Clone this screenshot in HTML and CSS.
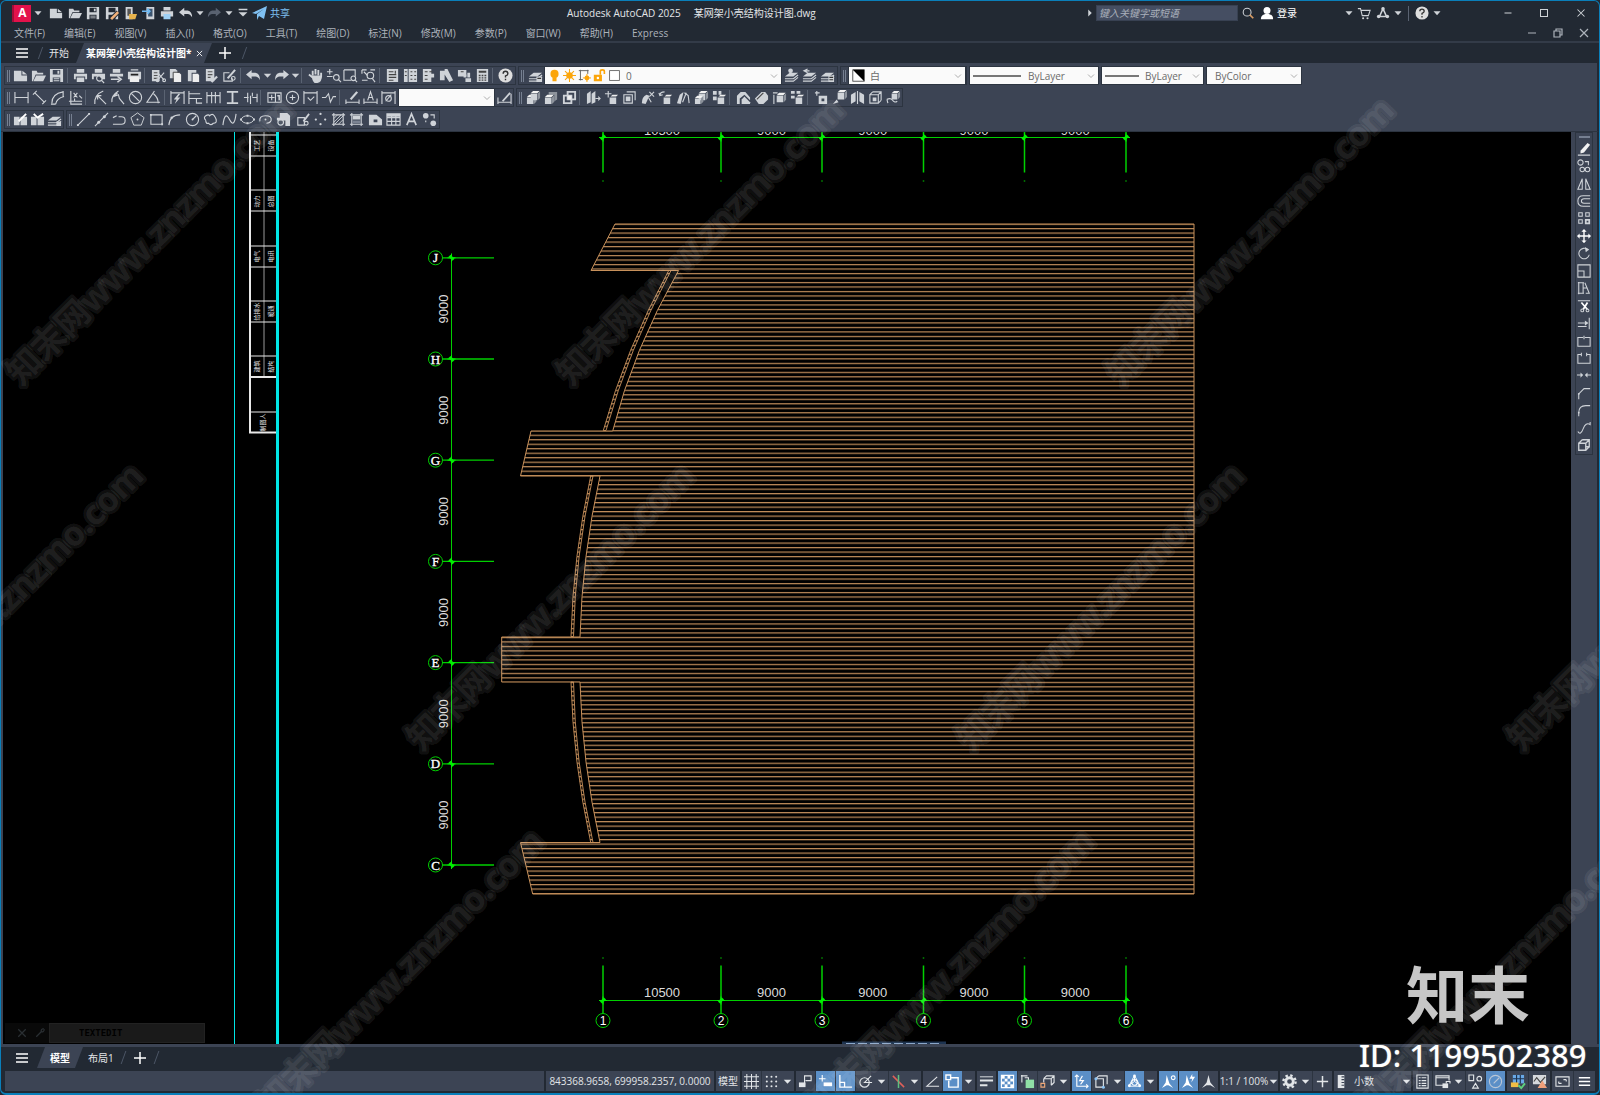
FILE: index.html
```html
<!DOCTYPE html>
<html lang="zh-CN">
<head>
<meta charset="utf-8">
<title>Autodesk AutoCAD 2025 - 某网架小壳结构设计图.dwg</title>
<link rel="stylesheet" href="styles.css">
</head>
<body>
<header class="titlebar">
  <div class="quick">
    <button class="logo" aria-label="应用程序菜单">A</button>
    <div class="quick-tools" data-tools="v new open save saveas openweb saveweb printc undo v redo-dim v more"></div>
    <button class="share"><span data-icon="plane"></span>共享</button>
  </div>
  <div class="title"><span>Autodesk AutoCAD 2025</span><span>某网架小壳结构设计图.dwg</span></div>
  <div class="account">
    <span class="cell-s" data-icon="right"></span>
    <input class="search" type="text" placeholder="键入关键字或短语" aria-label="搜索">
    <button class="cell-l" aria-label="搜索" data-icon="find"></button>
    <button class="login"><span data-icon="user"></span>登录</button>
    <div class="account-tools" data-tools="v cart apps v | help v"></div>
    <div class="window-tools" data-tools="min max close"></div>
  </div>
</header>
<nav class="menubar">
  <a href="#">文件(F)</a><a href="#">编辑(E)</a><a href="#">视图(V)</a><a href="#">插入(I)</a><a href="#">格式(O)</a><a href="#">工具(T)</a><a href="#">绘图(D)</a><a href="#">标注(N)</a><a href="#">修改(M)</a><a href="#">参数(P)</a><a href="#">窗口(W)</a><a href="#">帮助(H)</a><a href="#">Express</a>
  <div class="doc-tools" data-tools="min restore close"></div>
</nav>
<nav class="filetabs">
  <button class="burger" aria-label="菜单" data-icon="burger"></button>
  <span class="slash"></span>
  <button class="filetab">开始</button>
  <button class="filetab active"><span>某网架小壳结构设计图*</span><span data-icon="x"></span></button>
  <button class="plus" aria-label="新建" data-icon="plus"></button>
  <span class="slash"></span>
</nav>
<section class="docks">
  <div class="dockrow">
    <div class="toolbar w-standard" data-tools="new open save | print preview publish plot | cut copy paste match block | undo v redo v | pan zoomrt zoomwin zoomprev | props dcenter palettes sheets markup calc | help"></div>
    <div class="toolbar w-layers">
      <div class="tools w-one" data-tools="layers"></div>
      <label class="combo grow"><span data-icon="bulb"></span><span data-icon="sun"></span><span data-icon="vpfreeze"></span><span data-icon="lock"></span><span data-icon="swatch"></span><select aria-label="图层"><option>0</option></select><span data-icon="chev"></span></label>
      <div class="tools w-three" data-tools="laycur layprev laystate"></div>
    </div>
    <div class="toolbar w-color"><label class="combo grow"><span data-icon="bw"></span><select aria-label="颜色"><option>白</option></select><span data-icon="chev"></span></label></div>
    <label class="combo w-ltype"><span class="line long"></span><select aria-label="线型"><option>ByLayer</option></select><span data-icon="chev"></span></label>
    <label class="combo w-lweight"><span class="line"></span><select aria-label="线宽"><option>ByLayer</option></select><span data-icon="chev"></span></label>
    <label class="combo w-plot"><select aria-label="打印样式"><option>ByColor</option></select><span data-icon="chev"></span></label>
  </div>
  <div class="dockrow">
    <div class="toolbar w-dim">
      <div class="tools grow" data-tools="dimlin dimali dimarc dimord | radius jogged diameter angular | quick baseline continue space break | tol center inspect jog | dimedit dimtext dimupdate"></div>
      <label class="combo w-dimstyle"><select aria-label="标注样式"><option></option></select><span data-icon="chev"></span></label>
      <div class="tools w-one" data-tools="dimstyle"></div>
    </div>
    <div class="toolbar w-solid" data-tools="union subtract intersect | extrude moveface offsetface delface rotface taper copyface colorface | coloredge copyedge imprint clean | sep3 shell check bodyedit sweep3"></div>
  </div>
  <div class="dockrow">
    <div class="toolbar w-ref" data-tools="refedit refclose layset"></div>
    <div class="toolbar w-draw" data-tools="line xline pline polygon rect arc circle cloud spline ellipse earc insert mkblock point hatch gradient region table text addsel"></div>
  </div>
</section>
<main class="work">
  <div class="canvas">
    <svg class="model" viewBox="3 131 1568 913" preserveAspectRatio="xMidYMid slice">
      <defs>
        <pattern id="hatch" patternUnits="userSpaceOnUse" x="0" y="223" width="40" height="4.493"><rect width="40" height="1.2" fill="#c08c5a"/></pattern>
        <g id="tick"><path d="M-4 0H4M0-4V4" stroke-width="1"/><path d="M-2-2L2 2" stroke-width="3"/></g>
      </defs>
      <g stroke="#00e5e5" fill="none"><path d="M234.500 131V1044"/><path d="M277.500 131V1044" stroke-width="3"/></g>
      <g stroke="#e8e8e8" fill="none">
        <path d="M250 131V432.500" stroke-width="2"/><path d="M264 131V376" stroke="#999"/>
        <path d="M250 134.500H276M250 155.500H276M250 189.500H276M250 210.500H276M250 245.500H276M250 266.500H276M250 300.500H276M250 321.500H276M250 355.500H276M250 411.500H276"/>
        <path d="M250 376.500H276M249 432H276" stroke-width="2"/>
      </g>
      <g class="block-text" id="block-text"></g>
      <path fill="url(#hatch)" stroke="#c8915b" d="M615 223.500H1194V893.500H532.700L520.500 842H600Q582 761 580 681.500H501.700V636.500H580Q582 556 600 475.500H520.500L531 430.500H612.700Q633 350 678.500 270H591Z"/>
      <g fill="url(#hatch)" stroke="#c8915b" stroke-width=".9">
        <path d="M668.700 270Q625 350 603.300 430H606Q628 350 671 270Z"/>
        <path d="M590.700 475.500Q573 556 571 636H573.500Q575 556 593 475.500Z"/>
        <path d="M590.700 842Q573 761 571 681.500H573.500Q575 761 593 842Z"/>
      </g>
      <g id="axes" class="axes"></g>
      <g><path d="M842 1041H946V1044H842Z" fill="#1d3350"/><path d="M846 1043H940" stroke="#8aa6c8" stroke-dasharray="9 3" stroke-width="1"/></g>
    </svg>
    <form class="cmdline">
      <span class="grip"></span><button type="button" aria-label="关闭" data-icon="x"></button><button type="button" aria-label="自定义" data-icon="wrench"></button>
      <input type="text" value="TEXTEDIT" aria-label="命令">
    </form>
  </div>
  <aside class="sidedock"><div class="modify" data-tools="erase copyobj mirror offset array move rotate scale stretch trim extend breakpt breakobj join chamfer fillet blend explode"></div></aside>
</main>
<nav class="layouts">
  <button class="burger" aria-label="布局菜单" data-icon="burger"></button>
  <button class="layout active"><span>模型</span></button>
  <button class="layout">布局1</button>
  <span class="slash"></span>
  <button class="plus" aria-label="新建布局" data-icon="plus"></button>
  <span class="slash"></span>
</nav>
<footer class="status">
  <div class="cell blank"></div>
  <div class="cell coords">843368.9658, 699958.2357, 0.0000</div>
  <button class="cell space">模型</button>
  <div class="group" data-tools="grid snap v"></div>
  <div class="group" data-tools="infer dyn! ortho! polar v iso v"></div>
  <div class="group" data-tools="otrack osnap! v"></div>
  <div class="group" data-tools="lwt"></div>
  <div class="group" data-tools="transp! cycle osnap3 v"></div>
  <div class="group" data-tools="ucs! filter v gizmo! v"></div>
  <div class="group" data-tools="annvis! annauto! ann"></div>
  <button class="cell scale">1:1 / 100%<span data-icon="v"></span></button>
  <div class="group" data-tools="gear v addcross"></div>
  <button class="cell units"><span data-icon="ruler"></span>小数<span class="end" data-icon="v"></span></button>
  <div class="group" data-tools="qprops lockui v isolate perf!"></div>
  <div class="group wide" data-tools="hw graphics"></div>
  <div class="group wide" data-tools="full burger"></div>
</footer>
<div class="overlay">
  <svg class="marks" viewBox="0 0 1600 1095" preserveAspectRatio="xMidYMid slice" id="marks"></svg>
  <div class="stamp"><div class="brand">知末</div><div class="ident">ID: 1199502389</div></div>
</div>
<script src="app.js"></script>
</body>
</html>
```
FILE: styles.css
```css
:root {
  --dark: #222933;
  --panel: #3c4454;
  --edge: #2c3440;
  --ink: #cfd3d8;
  --blue: #5b8fc7;
}
* { box-sizing: border-box; }
body {
  margin: 0;
  height: 100vh;
  display: flex;
  flex-direction: column;
  position: relative;
  overflow: hidden;
  border: solid #0a7fba;
  border-width: 1px 1px 2px 1px;
  border-radius: 6px;
  background: var(--dark);
  color: var(--ink);
  font: 10px/14px "Open Sans", "Noto Sans CJK SC", sans-serif;
  white-space: nowrap;
}
button, input, select {
  margin: 0; padding: 0; border: 0; background: none;
  color: inherit; font: inherit; appearance: none; outline: 0;
}
a { color: inherit; text-decoration: none; }
svg { display: block; }
[data-icon], .tool { display: flex; align-items: center; justify-content: center; }
.tool { flex: 1 1 0; min-width: 0; }
.icon { width: 16px; height: 16px; flex: none; overflow: visible; }
[data-tools] { display: flex; align-items: center; }
.caret { flex: 0 0 10px; }
.sep { flex: 0 0 5px; height: 15px; border-left: 1px solid #5a6372; margin-left: 1px; }

.titlebar { flex: 0 0 24px; display: grid; grid-template-columns: 566px 1fr auto; align-items: center; }
.quick { display: flex; align-items: center; padding-left: 11px; }
.logo { width: 19px; height: 17px; background: #e3124b; color: #fff; font-weight: 700; font-size: 12px; line-height: 16px; border-left: 2px solid #a30d38; }
.quick-tools { width: 221px; }
.quick-tools .icon { width: 14px; height: 14px; }
.quick-tools .tool:first-child { flex-basis: 16px; justify-content: flex-start; }
.share { display: flex; align-items: center; gap: 2px; color: #7fc0f2; }
.title { display: flex; gap: 13px; color: #e2e5e8; }
.account { display: flex; align-items: center; }
.cell-s { width: 12px; }
.cell-l { width: 20px; }
.search { width: 142px; height: 16px; padding: 0 2px; background: #454e62; border: 1px solid #384152; font-style: italic; }
.search::placeholder { color: #aab0bb; opacity: 1; }
.account .icon { width: 14px; height: 14px; }
.login { display: flex; align-items: center; gap: 3px; width: 86px; padding-left: 2px; color: #fff; }
.account-tools { width: 98px; }
.account-tools .sep { margin-left: 5px; }
.window-tools { width: 109px; margin-left: 48px; }

.menubar { flex: 0 0 18px; display: flex; align-items: center; gap: 19px; padding-left: 13px; border-bottom: 2px solid #333b48; color: #adb3bb; }
.doc-tools { width: 78px; margin-left: auto; margin-right: 2px; }

.filetabs, .layouts { display: flex; align-items: stretch; color: #e2e5e8; }
.filetabs { padding-left: 9px; flex: 0 0 20px; }
.burger { width: 24px; }
.slash { width: 1px; margin: 4px 6px; background: #4c5666; transform: skewX(-20deg); }
.filetab { padding: 0 7px 0 2px; }
.filetab.active { width: 136px; display: flex; align-items: center; justify-content: space-between; padding: 0 9px 0 10px; background: var(--panel); clip-path: polygon(8px 0, 100% 0, calc(100% - 8px) 100%, 0 100%); font-weight: 700; color: #fff; }
.filetab.active .icon { width: 7px; height: 7px; }
.plus { width: 26px; }

.docks { flex: none; background: var(--panel); padding: 3px 3px 2px; display: flex; flex-direction: column; gap: 3px; border-right: 2px solid var(--dark); border-bottom: 1px solid #2c3440; }
.dockrow { display: flex; height: 19px; gap: 2px; }
.toolbar { display: flex; align-items: center; border: 1px solid var(--edge); padding-left: 7px; background: linear-gradient(90deg, #768091 0 1px, transparent 1px 2px, #768091 2px 3px, transparent 3px) 2px 3px / 4px 12px no-repeat; }
.toolbar .icon { width: 15px; height: 15px; }
.tools { height: 100%; }
.grow { flex: 1; }
.w-one { width: 18px; }
.w-three { width: 55px; }
.w-standard { width: 512px; }
.w-layers { width: 320px; }
.w-color { width: 127px; }
.w-ltype { width: 130px; }
.w-lweight { width: 103px; }
.w-plot { width: 96px; }
.w-dim { width: 510px; }
.w-dimstyle { width: 97px; }
.w-solid { width: 387px; }
.w-ref { width: 60px; }
.w-draw { width: 374px; }
.combo { display: flex; align-items: center; height: 19px; padding: 0 3px; background: #fafafa; color: #6b6b6b; border: 1px solid var(--edge); gap: 2px; min-width: 0; }
.combo .icon { width: 13px; height: 13px; }
.combo select { flex: 1; min-width: 0; padding-left: 3px; }
.w-plot select { padding-left: 5px; }
.combo [data-icon="chev"] .icon { width: 8px; height: 8px; }
.line { width: 34px; height: 2px; background: #777; margin: 0 1px 0 0; }
.line.long { width: 48px; margin-right: 2px; }

.work { flex: 1; min-height: 0; display: flex; background: var(--panel); border-left: 2px solid var(--panel); }
.canvas { flex: 1; min-width: 0; position: relative; background: #000; }
.model { position: absolute; width: 100%; height: 100%; }
.axes { font: 13px "Liberation Sans", sans-serif; fill: #dcdcdc; text-anchor: middle; }
.axes .serif { font: 13px "Liberation Serif", serif; fill: #fff; stroke: #fff; stroke-width: .3; }
.axes .num { font-size: 12px; fill: #fff; }
.block-text { font: 6px "Noto Sans CJK SC", sans-serif; fill: #e4e4e4; text-anchor: middle; }
.sidedock { flex: 0 0 28px; padding: 0 4px 0 4px; border-right: 2px solid var(--dark); }
.modify { flex-direction: column; height: 323px; padding-top: 7px; border: 1px solid var(--edge); background: linear-gradient(#768091 0 0) 3px 3px / 11px 2px no-repeat; }
.modify .icon { width: 14px; height: 14px; }
.cmdline { position: absolute; left: 2px; bottom: 1px; width: 200px; height: 20px; display: flex; align-items: stretch; color: #2a2f33; background: #090909; }
.cmdline .grip { width: 8px; }
.cmdline button { width: 18px; }
.cmdline .icon { width: 10px; height: 10px; }
.cmdline input { flex: 1; min-width: 0; padding-left: 29px; background: #1a1a1a; color: #000; font: 700 9px "DejaVu Sans Mono", monospace; border: 1px solid #222; }

.layouts { flex: 0 0 25px; padding: 0 0 1px 9px; border-top: 3px solid var(--panel); }
.layout { padding: 0 3px 0 5px; }
.layout.active { width: 46px; margin-left: 3px; padding: 0; background: var(--panel); color: #fff; font-weight: 700; clip-path: polygon(8px 0, 100% 0, calc(100% - 8px) 100%, 0 100%); }
.layouts .plus { width: 20px; }

.status { flex: 0 0 24px; display: flex; gap: 2px; padding: 2px 4px 2px; color: #e2e5e8; }
.cell { background: var(--panel); display: flex; align-items: center; justify-content: center; }
.blank { flex: 1; }
.coords { width: 168px; }
.space { width: 24px; }
.scale { width: 58px; gap: 0; }
.units { width: 77px; justify-content: flex-start; gap: 5px; }
.units .end { margin-left: auto; }
.cell [data-icon="v"] { width: 10px; }
.group { gap: 1px; background: var(--edge); }
.group .tool { flex: 0 0 19px; height: 20px; background: var(--panel); }
.group.wide .tool { flex-basis: 21px; }
.group .tool.caret { flex: 0 0 13px; margin-left: -1px; }
.group .tool.on { background: var(--blue); color: #fff; }
.status .icon { width: 15px; height: 15px; }

.overlay { position: absolute; inset: 0; pointer-events: none; }
.marks { width: 100%; height: 100%; font: 700 34px "Noto Sans", "Noto Sans CJK SC", sans-serif; }
.marks text { fill: #fff; fill-opacity: .08; stroke: #fff; stroke-opacity: .07; stroke-width: 6px; stroke-linejoin: round; paint-order: stroke; }
.stamp { position: absolute; right: 10px; bottom: 18px; width: 230px; color: #fff; font-family: "Noto Sans", "Noto Sans CJK SC", sans-serif; }
.brand { font: 700 62px/66px "Noto Sans CJK SC", sans-serif; color: #c6c6c6; padding-left: 47px; margin-bottom: 10px; }
.ident { font-size: 31px; font-weight: 500; line-height: 40px; text-shadow: 0 0 2px #555, 0 0 1px #777; }
```
FILE: app.js
```js
const s = (d, c, w) => `<path d="${d}" fill="none" stroke="${c || 'currentColor'}" stroke-width="${w || 1.2}"/>`;
const f = (d, c) => `<path d="${d}" fill="${c || 'currentColor'}" fill-rule="evenodd"/>`;
const ring = (x, y, r, c) => `<circle cx="${x}" cy="${y}" r="${r}" fill="none" stroke="${c || 'currentColor'}" stroke-width="1.2"/>`;
const dot = (x, y, r, c) => `<circle cx="${x}" cy="${y}" r="${r}" fill="${c || 'currentColor'}"/>`;
const small = f('M6 8h7v7H6z') + f('M7 7l2-2h6l-2 2z', '#eee');
const sheets = f('M1 9l5-4h9l-5 4z') + s('M1 11.500h9l5-4M1 14h9l5-4');
const solid = (x, y, w) => f(`M${x} ${y + 3}h${w - 3}v${w - 3}h-${w - 3}z`) + f(`M${x} ${y + 2.5}l2.500-2.500h${w - 3}l-2.500 2.500z`, '#f2f2f2') + f(`M${x + w - 2.5} ${y + 3}l2.500-2.500v${w - 3}l-2.500 2.500z`, '#8d939c');

const icons = {
  v: f('M4 6h8l-4 4.500z'),
  chev: s('M2 5l6 6 6-6', '#999', 1.6),
  right: f('M6 4l4 4-4 4z'),
  more: s('M3 4h10', null, 1.6) + f('M3 7h10l-5 5z'),
  new: f('M1 3h8v5h6v6H1zM10 3l5 4h-5z'),
  open: f('M1 3h5l1 2h6v2H5l-3 7H1z') + f('M5.500 8H16l-3 6H2.500z'),
  save: f('M1 1h14v14H1zM4 2v5h8V2zM4 10v5h8v-5z') + f('M9 3h2v3H9zM5 11h6v1H5zM5 13h6v1H5z'),
  saveas: f('M1 1h14v14H1zM4 2v5h8V2zM4 10v5h8v-5z') + s('M7 15l8-8', '#222933', 5) + s('M7 15l8-8', '#f2b179', 3),
  openweb: f('M3 1h8v14H3z') + f('M5 3h4v8H5z', '#555') + f('M7 9h9l-2 6H7z', '#e7b34c'),
  saveweb: f('M5 1h9v14H5z') + f('M7 3h5v9H7z', '#3c5570') + s('M0 6h8M6 3l3 3-3 3', '#6db8f2', 1.8),
  print: f('M4 1h8v4H4zM1 6h14v6h-2V9H3v3H1zM4 10h8v5H4z'),
  printc: f('M4 1h8v4H4zM1 6h14v6H1z') + f('M4 9h8v6H4z', '#9ed0f4'),
  preview: f('M4 1h8v4H4zM1 6h14v6h-3L9 9H3v3H1z') + ring(9, 11, 3) + s('M11 13l3 3'),
  publish: f('M4 1h8v4H4zM1 6h14v3H1z') + s('M2 12h9M9 9l4 3-4 3', null, 1.6),
  plot: f('M1 4h14v8H1z') + f('M4 6h8v2H4z', '#222') + f('M3 9h10v6H3z', '#eee') + s('M4 2h8'),
  cut: f('M1 2h8v12H1z') + s('M3 5h4M3 8h4M3 11h4', '#555') + s('M7 5l7 8M14 5l-7 8') + ring(7, 13, 1.5) + ring(14, 13, 1.5),
  copy: f('M2 1h6l2 2v8H2z') + f('M6 5h6l2 2v8H6z', '#eee') + s('M5.500 15V4.500H12', '#444', 1),
  paste: f('M2 2h9v3H6v9H2z') + f('M7 6h6l1 2v7H7z', '#eee'),
  match: f('M2 1h9v13H2z') + s('M4 4h5M4 7h5M4 10h3', '#555') + s('M8 15l6-6', null, 2.4),
  block: s('M8 5H2v9h9v-3') + s('M6 11l8-9', null, 2.2) + ring(12, 11, 2),
  undo: f('M0 7l6-5v3h4q5 1 5 8-2-4-5-4H6v3z'),
  redo: f('M16 7l-6-5v3H6q-5 1-5 8 2-4 5-4h4v3z'),
  'redo-dim': f('M16 7l-6-5v3H6q-5 1-5 8 2-4 5-4h4v3z', '#596270'),
  pan: s('M5 8V3M8 7V1M11 8V2M14 9V5M5 10L1 7', null, 2) + f('M4 8h11q0 7-5 8H7q-3-3-3-8z'),
  zoomrt: s('M1 4h6M4 1v6M1 9h6') + ring(11, 10, 3) + s('M13 12l3 3'),
  zoomwin: s('M1 2h12v7M1 2v11h8') + ring(11, 11, 2.500) + s('M13 13l2 2'),
  zoomprev: s('M1 2h5M1 2v4M15 2h-5M1 13h6M3 4l4 4') + ring(10, 8, 3.500) + s('M12 11l3 4'),
  props: f('M2 1h12v14H2z') + s('M4 4h5M4 7h8M4 10h8M4 13h5M11 3v3', '#444'),
  dcenter: f('M1 1h4v14H1zM6 1h9v14H6z') + s('M2 4h2M2 8h2M8 4h2M12 4h2M8 8h2M12 8h2M8 12h2M12 12h2', '#444'),
  palettes: f('M2 1h9v14H2z') + s('M4 4h3M4 8h3M4 12h3M9 4h3', '#444') + f('M10 6h4v4h-4z'),
  sheets: f('M1 3h5v10H1zM6 1h3l6 12-4 2-5-8z'),
  markup: f('M1 2h9v7H1z') + s('M4 4h3', '#444') + f('M7 7h3v3H7zM11 5h3v5h-3zM9 11h6v4H9z'),
  calc: f('M2 1h12v14H2z') + s('M4 4h8', '#444', 2) + s('M4 8h8M4 10.500h8M4 13h8', '#444', 1.4) + s('M6.500 6v9M9.500 6v9'),
  help: dot(8, 8, 7.5, '#dedede') + s('M5.500 6q0-2.500 2.500-2.500T10.500 6Q10.500 7.500 8 8.500v1.500M8 11.500v1.500', '#333', 1.5),
  layers: sheets + f('M9 9h6v6H9z') + s('M10 11h4', '#333'),
  laycur: sheets + dot(7, 3, 2.500), layprev: sheets + s('M6 1L2 3l4 2M2 3h6'), laystate: sheets + f('M9 8h6v7H9z') + s('M10 10h4M10 12.500h4', '#333'),
  layset: sheets + f('M10 10h5v5h-5z'),
  bulb: dot(8, 6, 5, '#fba50a') + f('M5.500 10h5v5h-5z', '#fba50a'),
  sun: dot(8, 8, 4, '#fba50a') + s('M8 0v16M0 8h16M2.500 2.500l11 11M13.500 2.500l-11 11', '#fba50a', 1.3),
  vpfreeze: s('M1 2h12M3 1v13M12 1v5M1 13h5', '#666') + dot(11, 11, 3, '#fba50a') + s('M11 6v10M6 11h10', '#fba50a'),
  lock: f('M1 7h10v8H1z', '#fba50a') + s('M9 7V3q0-2 2.500-2T14 3v3', '#fba50a', 2) + dot(6, 11, 1.500, '#fff'),
  swatch: '<rect x="2" y="2" width="12" height="12" fill="#fff" stroke="#555"/>',
  bw: '<rect x="1" y="1" width="14" height="14" fill="#fff" stroke="#333"/><path d="M1 1h14v14z"/>',
  dimlin: s('M1 2v12M15 2v12M1 8h14'), dimali: s('M1 5l4-4M11 15l4-4M3 3l10 10'),
  dimarc: s('M2 14Q2 4 14 2M6 15Q7 9 15 7M1 15h5M14 1v6'), dimord: s('M3 1v14h12M1 12h14M6 3l4 5M10 3l-4 5M12 6l3 3M7 12V9'),
  radius: s('M12 1Q2 5 3 15M6 6l9 9M6 10V6h4'), jogged: s('M9 1Q1 6 2 13M4 7l5-2 1 4 5 6M4 7l4-4'),
  diameter: ring(8, 8, 6.500) + s('M3.500 3.500l9 9'), angular: s('M9 1L1 13h14M8 4q5 4 5 10'),
  quick: s('M1 1v14M15 1v14M1 3h14') + f('M9 4L4 10h3l-2 5 6-7H8l3-4z'), baseline: s('M1 1v14M1 4h12M9 9h6M1 9h8v5h6'),
  continue: s('M1 2v12M6 2v12M10 2v12M15 2v12M1 6h14'), space: s('M2 2h12M2 14h12M8 2v12', null, 2),
  break: s('M1 8h5M10 8h5M5 3v10M10 3v4M15 4v9M8 6v9'), tol: s('M1 3h14v10H1zM9 3v10M2 8h6M5 5v6') + s('M11 6h2v5', null, 1.6),
  center: ring(8, 8, 6.500) + s('M5 8h6M8 5v6'), inspect: s('M1 1v14M15 1v14M1 3h14M5 8l3 3 4-4'),
  jog: s('M1 8h4l3-4 2 9 3-6h3'), dimedit: s('M1 10v5M15 10v5M1 13h14') + s('M6 10l7-8', null, 2.4),
  dimtext: s('M1 9v6M15 9v6M1 13h14M5 11l3-9 3 9M6 8h4'), dimupdate: s('M1 1v14M15 1v14M1 3h14M5 12l6-7') + ring(8, 9, 3),
  dimstyle: s('M1 8v7M15 4v11M1 13h14') + s('M6 12l8-9', null, 2),
  union: solid(1, 5, 10) + solid(5, 1, 10), subtract: f('M5 2h9v8l-3 2V5H5z', '#8d939c') + solid(1, 5, 10),
  intersect: s('M2 6h8v8H2zM6 2h8v8H6z', null, 2) + f('M6 6h4v4H6z', '#eee'),
  extrude: f('M1 4l4-3v12l-4 2zM6 4l4-3v12l-4 2z') + s('M10 9h5M13 7l2 2-2 2'), moveface: s('M1 4h7M4.500 1v7') + small,
  offsetface: s('M2 5h9v9H2zM5 2h9v9') + f('M4 7h5v5H4z'), delface: f('M2 14q0-7 5-9l3 1-4 9z') + s('M10 2l5 5M15 2l-5 5M9 8l3 5'),
  rotface: s('M2 6q0-4 5-4M1 3l1 3 3-1') + small, taper: f('M1 14l3-9 4-3-3 13z') + s('M9 3l4 3 1 8M7 13l4-10'),
  copyface: solid(5, 1, 10) + solid(1, 6, 9), colorface: f('M1 1h4v4H1zM7 1h3v4H7zM1 7h4v4H1z') + small,
  coloredge: f('M1 15V6l4-4h5l5 6v3L9 5 4 9v6z') + f('M6 10l3-3 6 6v2H6z'), copyedge: f('M1 9l7-7h4l3 4v4l-5 5H5z') + s('M3 10l7-7', '#444'),
  imprint: s('M2 5v10M1 3h5') + solid(5, 3, 10), clean: f('M1 1h4v3H1zM1 6h4v3H1zM7 1h4v3H7z') + small,
  sep3: s('M1 3h5M3 1v5') + f('M5 6h9v9H5zM8 9v3h3V9z'), shell: solid(6, 0, 10) + f('M1 15l4-5 2 3z'),
  check: f('M1 5l5-3v10l-5 3zM10 2l5 3v10l-5-3z') + s('M8 1v14'), bodyedit: s('M2 5h9v9H2zM5 2h9v9M2 5l3-3M11 5l3-3M11 14l3-3') + f('M5 8h4v4H5z'),
  sweep3: solid(6, 1, 9) + s('M1 10q4-2 6 1t5 1M1 10l1 4'),
  refedit: f('M1 5h6v9H1zM8 5h7v9H8z') + s('M6 10l8-8', '#fff', 2), refclose: f('M1 5h6v9H1zM8 5h7v9H8z') + s('M4 2l4 4 6-4', '#fff', 2),
  line: s('M2 14L14 2') + f('M1 13h2v2H1zM13 1h2v2h-2z'), xline: s('M1 15L15 1') + dot(5, 11, 1.6) + dot(11, 5, 1.6),
  pline: s('M1 13h9q4 0 4-4T10 5H7M1 6l4-2'), polygon: s('M8 1l7 5-3 8H4L1 6z', null, 1) + dot(8, 8, 1), rect: s('M2 3h12v10H2z') + f('M1 2h2v2H1zM13 12h2v2h-2z'),
  arc: s('M2 14Q3 3 14 3') + dot(5, 6, 1.3), circle: ring(8, 8, 6.500) + s('M8 8l4-4') + dot(8, 8, 1),
  cloud: s('M3 9Q0 6 3 4t4 0q3-3 5 0t2 4q1 4-3 4-3 3-5 0-3 1-3-3'), spline: s('M1 14Q3-2 8 8T15 2'),
  ellipse: `<ellipse cx="8" cy="8" rx="6.500" ry="4" fill="none" stroke="currentColor"/>` + f('M7 3h2v2H7zM7 11h2v2H7zM0 7h2v2H0zM14 7h2v2h-2z'),
  earc: s('M2 10Q1 4 8 4q7 0 6 5-1 3-5 3') + dot(8, 8, 1), insert: f('M4 1h8l3 3v11h-5V9H1V6h3z') + ring(5, 11, 3), mkblock: s('M3 6h7v8H3z') + s('M9 10l6-8', null, 1.8) + ring(12, 12, 2),
  point: dot(8, 2, 1.2) + dot(3, 8, 1.2) + dot(13, 8, 1.2) + dot(8, 13, 1.2),
  hatch: s('M1 3h14M1 13h14M3 1v14M13 1v14') + s('M3 7l4-4M3 11l8-8M4 13l9-9M8 13l5-5', null, 1),
  gradient: s('M1 3h14M1 13h14M3 1v14M13 1v14') + f('M4 4h8v4H4z') + f('M4 9h8v3H4z', '#7b8392'), region: f('M1 3h8l6 5v6H1zM6 8v3h4V8z'),
  table: s('M1 2h14v12H1zM1 6h14M1 10h14M6 4v10M10.500 4v10') + f('M1 2h14v3H1z'), text: s('M3 14L8 2l5 12M5 10h6', null, 1.7),
  addsel: dot(4, 4, 3) + dot(12, 12, 3) + s('M9 3h4v4M4 9v2'),
  erase: f('M4 10l8-9 3 2-7 9-4 1z', '#f2f2f2') + s('M1 15h14'), copyobj: ring(4, 4, 3) + ring(6, 12, 2.6) + ring(12, 12, 2.6) + s('M9 3h4v4'),
  mirror: s('M6 2v12H1zM10 2v12h5z'), offset: s('M15 2H7Q1 2 1 8t6 6h8M15 5.500H8q-3 0-3 2.500t3 2.500h7'),
  array: s('M2 2h4v4H2zM10 2h4v4h-4zM2 10h4v4H2z') + f('M9 9h6v6H9zM11 11v2h2v-2z'),
  move: s('M8 1v14M1 8h14', '#fff', 1.6) + f('M8 0l3 3H5zM8 16l3-3H5zM0 8l3-3v6zM16 8l-3-3v6z', '#fff'),
  rotate: s('M12 4A6 6 0 1 0 14 10') + f('M9 1l5 3-4 3z'), scale: s('M1 1h14v14H1zM1 8h7v7'), stretch: s('M2 1v14M1 2h7M1 14h7M7 2v12M9 2l5 12h-4M7 8h5'),
  trim: s('M1 2h14') + s('M5 4l7 8M12 4L7 12', '#fff', 2) + ring(6, 13, 1.6) + ring(12, 13, 1.6), extend: s('M14 2v13M1 12h10M1 8h8') + f('M9 5l4 3-4 3z'),
  breakpt: s('M9 4h6v10H1V4h6M8 2v4'), breakobj: s('M11 4h4v10H1V4h4M5 2v4M11 2v4'), join: s('M0 8h6M10 8h6') + f('M4 5l3 3-3 3zM12 5L9 8l3 3z'),
  chamfer: s('M2 15V9l6-6h7') + dot(2, 9, 1), fillet: s('M2 15v-4q0-8 8-8h5') + dot(2, 11, 1), blend: s('M1 12q3 5 6-3t8-5v-3'),
  explode: s('M2 6h8v8H2zM6 2h8v8h-4M2 6l4-4M10 6l4-4M10 14l4-4', null, 1.5),
  min: s('M4 8h8'), max: s('M4 4h8v8H4z'), close: s('M4 4l8 8M12 4l-8 8'), restore: s('M4 6h6v6H4zM6 6V4h6v6h-2'), x: s('M2 2l12 12M14 2L2 14', null, 2),
  burger: s('M2 4h12M2 8h12M2 12h12', '#fff', 1.5), plus: s('M8 2v12M2 8h12', '#fff', 1.5), addcross: s('M8 2v12M2 8h12', null, 1.6),
  plane: f('M0 8L15 1l-3 13-5-3-2 4V9l7-5-8 5z'), find: ring(7, 7, 4.500) + s('M10 10l4 4', '#d89b62', 2), user: dot(8, 5, 4) + f('M1 15q0-5 5-6h4q5 1 5 6z'),
  cart: s('M1 3h3l2 8h7l2-6H5') + dot(7, 14, 1.2) + dot(12, 14, 1.2), apps: s('M4 12L8 3l4 9z', null, 1.8) + dot(8, 3, 2) + dot(3, 12, 2) + dot(13, 12, 2),
  wrench: s('M2 14l8-8M10 6q-1-4 4-5M10 6q4 1 5-4', null, 2),
  grid: s('M3 0v16M8 0v16M13 0v16M0 3h16M0 8h16M0 13h16', null, 1.1), snap: [3, 8, 13].map(x => [3, 8, 13].map(y => dot(x, y, 1.1)).join('')).join(''),
  infer: f('M1 9h7v5H1z') + s('M7 12V2h7v5H8'), dyn: s('M1 5h7M4.500 1v7') + f('M6 9h9v4H6z'), ortho: s('M2 1v13h13M2 9h5v5', null, 1.4),
  polar: ring(7, 9, 5) + s('M14 2L7 9h8'), iso: s('M2 2l12 12', '#e0605a', 1.6) + s('M8 1v14', '#5fbf7f', 1.6), otrack: s('M13 3L2 13h13'),
  osnap: s('M6 4h8v10H4V7', null, 1.5) + s('M1 1h5v5H1z', null, 1.500), lwt: s('M1 3h14', null, 1) + s('M1 7h14M1 12h8', null, 2.2),
  transp: s('M1.500 1.500h13v13h-13z', '#fff') + [0, 1, 2, 3].map(r => [0, 1].map(c => f(`M${2 + c * 6 + (r % 2) * 3} ${2 + r * 3}h3v3h-3z`, '#fff')).join('')).join(''),
  cycle: s('M2 1v8M1 2h7M5 4h4v3') + f('M6 6h9v9H6z', '#8fe0a6'),
  osnap3: s('M4 5l3-3h8v7l-3 3M4 5v4M4 5h8v7M12 5l3-3') + s('M1 10h4v4H1z', '#f0a878'), ucs: s('M3 1v12h12M1 3l2-2 2 2M13 11l2 2-2 2M9 2L6 7h4l-3 4'),
  filter: s('M2 5h8v9H2zM5 2h9v9M2 5l3-3') + dot(2, 5, 1.6, '#8cc4f5') + dot(10, 14, 1.6, '#8cc4f5'), gizmo: s('M8 1.500L14 13H2zM8 8V2M8 8l6 4M8 8l-6 4', null, 1) + ring(8, 9, 3) + dot(8, 2, 1.5) + dot(2.5, 12.5, 1.5) + dot(13.5, 12.5, 1.5),
  annvis: f('M6 1l3 9 4 5-5-3-2 0-5 3 4-6z', '#fff') + ring(13, 4, 2), annauto: f('M6 1l3 9 4 5-5-3-2 0-5 3 4-6z', '#fff') + f('M12 0l-3 5h3l-1 4 4-6h-3z', '#fff'), ann: f('M8 1l2 8 5 6-5-3H6l-5 3 5-6z'),
  gear: '<circle cx="8" cy="8" r="4" fill="none" stroke="currentColor" stroke-width="3"/><circle cx="8" cy="8" r="6.500" fill="none" stroke="currentColor" stroke-width="2.500" stroke-dasharray="2.550"/>',
  ruler: f('M4 1h7v14H4z') + s('M8 3h3M8 6h3M8 9h3M8 12h3', '#3c4454'), qprops: s('M2 1h12v14H2z') + s('M4 4h2M7 4h5M4 7h2M7 7h5M4 10h2M7 10h5M4 12.500h2M7 12.500h5', null, 1.3),
  lockui: s('M9 12H1V2h14v5M1 4h14') + f('M8 10h6v5H8z') + s('M12 10V8h4v2'), isolate: s('M1 1h5v6H1zM5 15l3-5 3 5z') + ring(12, 5, 2.5), perf: ring(8, 8, 6.500, '#b9c6d6') + s('M6 10l6-6', '#b9c6d6'),
  hw: f('M3 1h12v9H3z', '#69a9e6') + s('M7 1v9M11 1v9M3 5h12', '#1d3350') + f('M1 9h8v5H1z', '#f2bd45') + s('M9 12l3 3 4-5', '#5ed17c', 2),
  graphics: f('M1 1h14v10H1z', '#d5d8dc') + s('M2 8l3-4 4 5 5-6', '#444') + f('M11 7l5 8H6z', '#f2a07a'), full: s('M1 3h14v10H1zM4 10V8M4 10h3M12 6H9M12 6v2')
};

const draw = name => `<svg class="icon" viewBox="0 0 16 16" aria-hidden="true">${icons[name]}</svg>`;
document.querySelectorAll('[data-icon]').forEach(el => { el.innerHTML = draw(el.dataset.icon); });
document.querySelectorAll('[data-tools]').forEach(el => {
  el.innerHTML = el.dataset.tools.split(' ').map(t => {
    if (t === '|') return '<span class="sep"></span>';
    const name = t.replace('!', '');
    const cls = 'tool' + (t === 'v' ? ' caret' : '') + (t !== name ? ' on' : '');
    return `<button type="button" class="${cls}" aria-label="${name}">${draw(name)}</button>`;
  }).join('');
});

/* Structural grid: axis bubbles, dimension lines and dimension values */
const green = 'stroke="#00d000" fill="none"';
const columns = [603, 721, 822, 923.5, 1024.5, 1126];
const rows = ['J', 'H', 'G', 'F', 'E', 'D', 'C'];
let axes = `<path ${green} d="M603 1000H1126M603 137H1126M451.500 253V868"/>`;
columns.forEach((x, i) => {
  axes += `<path ${green} stroke-width="1.500" d="M${x} 965V1013M${x} 131V172M${x} 957v1M${x} 180v1"/>`
    + `<circle ${green} cx="${x}" cy="1020" r="7"/><text class="num" x="${x}" y="1024.500">${i + 1}</text>`;
  [1000, 137].forEach(y => { axes += `<use href="#tick" stroke="#00f000" transform="translate(${x} ${y}) scale(1 -1)"/>`; });
  if (i) {
    const mid = (x + columns[i - 1]) / 2, value = i === 1 ? 10500 : 9000;
    axes += `<text x="${mid}" y="996.500">${value}</text><text x="${mid}" y="134.500">${value}</text>`;
  }
});
rows.forEach((name, i) => {
  const y = 257.3 + i * 101.2;
  axes += `<circle ${green} cx="435.500" cy="${y}" r="7"/><path ${green} stroke-width="1.300" d="M442 ${y}H494"/>`
    + `<use href="#tick" stroke="#00f000" transform="translate(451.500 ${y})"/><text class="serif" x="435.500" y="${y + 4.5}">${name}</text>`;
  if (i) axes += `<text transform="translate(448 ${y - 50}) rotate(-90)">9000</text>`;
});
document.getElementById('axes').innerHTML = axes;

/* Sign-off column beside the sheet frame */
const cells = [['工艺', 257, 145], ['设备', 271, 145], ['动力', 257, 201], ['总图', 271, 201], ['电气', 257, 256], ['电讯', 271, 256], ['给排水', 257, 311], ['暖通', 271, 311], ['建筑', 257, 366], ['结构', 271, 366], ['制图人', 263, 422]];
document.getElementById('block-text').innerHTML = cells.map(([t, x, y]) => `<text transform="translate(${x + 2} ${y}) rotate(-90)">${t}</text>`).join('');

/* Diagonal repeat of the site name */
const marks = [];
for (let r = 0; r < 3; r++) for (let c = -1; c < 4; c++) {
  marks.push(`<text transform="translate(${571 + (c - 1) * 551 - r * 150 + (r === 2 ? 551 : 0)} ${387 + r * 366}) rotate(-45)">知末网www.znzmo.com</text>`);
}
document.getElementById('marks').innerHTML = marks.join('');
```
